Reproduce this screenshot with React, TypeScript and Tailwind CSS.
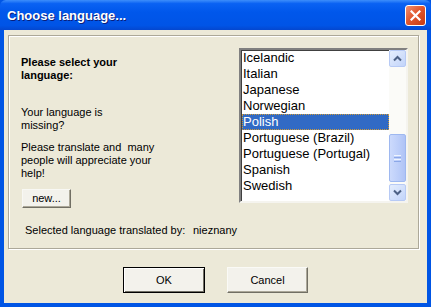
import React from "react";

const langs = [
  "Icelandic",
  "Italian",
  "Japanese",
  "Norwegian",
  "Polish",
  "Portuguese (Brazil)",
  "Portuguese (Portugal)",
  "Spanish",
  "Swedish",
];

function Chevron({ up }: { up?: boolean }) {
  return (
    <svg width="9" height="7" viewBox="0 0 9 7">
      <path
        d={up ? "M1 5.5 L4.5 2 L8 5.5" : "M1 1.5 L4.5 5 L8 1.5"}
        fill="none"
        stroke="#4D6185"
        strokeWidth="2"
      />
    </svg>
  );
}

export default function App() {
  return (
    <div
      className="w-[431px] h-[307px] flex flex-col bg-[#0055E5] overflow-hidden"
      style={{ fontFamily: '"Liberation Sans", Arial, sans-serif' }}
    >
      {/* Title bar */}
      <div className="h-[30px] shrink-0 flex items-center justify-between pl-[7px] pr-[5px] bg-[linear-gradient(to_bottom,#3D8EFB_0%,#0A62F3_12%,#0057EB_40%,#0054E6_85%,#0447CF_100%)] rounded-t-[6px]">
        <span className="text-white font-bold text-[13px] leading-none pt-[1px] [text-shadow:1px_1px_0_#0A1E7A]">
          Choose language...
        </span>
        <div className="w-[21px] h-[21px] rounded-[3px] border border-white flex items-center justify-center bg-[linear-gradient(135deg,#EE9175_0%,#E2582F_45%,#C73A12_100%)]">
          <svg width="11" height="11" viewBox="0 0 11 11">
            <path d="M1.5 1.5 L9.5 9.5 M9.5 1.5 L1.5 9.5" stroke="white" strokeWidth="2.2" strokeLinecap="square" />
          </svg>
        </div>
      </div>

      {/* Body */}
      <div className="flex-1 mx-[4px] mb-[4px] bg-[#ECE9D8] flex flex-col pt-[5px] pl-[4px] pr-[8px]">
        {/* Group box */}
        <div className="h-[214px] border border-[#ACA899] shadow-[1px_1px_0_#fff,inset_1px_1px_0_#fff] flex flex-col pt-[12px]">
          <div className="flex">
            <div className="flex-1 pl-[12px] text-[11px] leading-[13px] text-black">
              <div className="mt-[8px] font-bold">
                Please select your
                <br />
                language:
              </div>
              <div className="mt-[24px]">
                Your language is
                <br />
                missing?
              </div>
              <div className="mt-[9px]">
                Please translate and&nbsp; many
                <br />
                people will appreciate your
                <br />
                help!
              </div>
              <div className="mt-[9px] ml-[1px] w-[49px] h-[19px] flex items-center justify-center bg-[#F3F2EC] border border-[#F8F8F4] border-r-[#716F64] border-b-[#716F64] shadow-[inset_-1px_-1px_0_#ACA899]">
                new...
              </div>
            </div>
            {/* Listbox */}
            <div className="self-start mr-[10px] w-[169px] h-[155px] border-2 border-t-[#808080] border-l-[#808080] border-r-[#F5F4EF] border-b-[#F5F4EF] shadow-[inset_1px_1px_0_#404040] bg-white flex">
              <div className="flex-1 pl-[1px]">
                {langs.map((l) => (
                  <div
                    key={l}
                    className={
                      l === "Polish"
                        ? "h-[16px] pl-[1px] text-[13px] leading-[16px] bg-[#316AC5] text-white outline-1 outline-dotted outline-[#CE9A3A] -outline-offset-1"
                        : "h-[16px] pl-[1px] text-[13px] leading-[16px] text-black"
                    }
                  >
                    {l}
                  </div>
                ))}
              </div>
              <div className="w-[17px] flex flex-col bg-[#FBFBF8]">
                <div className="h-[17px] rounded-[2px] border border-[#B7CAF5] bg-[linear-gradient(135deg,#E5EEFD_0%,#C2D4FA_100%)] flex items-center justify-center">
                  <Chevron up />
                </div>
                <div className="flex-1 relative">
                  <div className="absolute left-0 right-0 top-[67px] h-[48px] rounded-[2px] border border-[#9EB8F0] bg-[linear-gradient(to_right,#CCDAFC_0%,#BBCDF9_60%,#AFC3F6_100%)] flex flex-col items-center justify-center gap-[1px]">
                    <div className="w-[7px] h-[1px] bg-[#EEF4FE]" />
                    <div className="w-[7px] h-[1px] bg-[#8CA8E8]" />
                    <div className="w-[7px] h-[1px] bg-[#EEF4FE]" />
                    <div className="w-[7px] h-[1px] bg-[#8CA8E8]" />
                  </div>
                </div>
                <div className="h-[17px] rounded-[2px] border border-[#B7CAF5] bg-[linear-gradient(135deg,#E5EEFD_0%,#C2D4FA_100%)] flex items-center justify-center">
                  <Chevron />
                </div>
              </div>
            </div>
          </div>
          <div className="mt-[16px] pl-[16px] flex text-[11px] leading-[13px] text-black">
            <span className="w-[168px]">Selected language translated by:</span>
            <span>nieznany</span>
          </div>
        </div>

        {/* Buttons */}
        <div className="mt-[18px] flex justify-center gap-[22px] text-[11px] text-black pl-[4px]">
          <div className="w-[82px] h-[26px] border border-black bg-[#F3F2EC] shadow-[inset_1px_1px_0_#fff,inset_-1px_-1px_0_#716F64] flex items-center justify-center">
            OK
          </div>
          <div className="w-[81px] h-[26px] border border-[#FAFAF6] border-r-[#716F64] border-b-[#716F64] bg-[#F3F2EC] shadow-[inset_-1px_-1px_0_#ACA899] flex items-center justify-center">
            Cancel
          </div>
        </div>
      </div>
    </div>
  );
}
